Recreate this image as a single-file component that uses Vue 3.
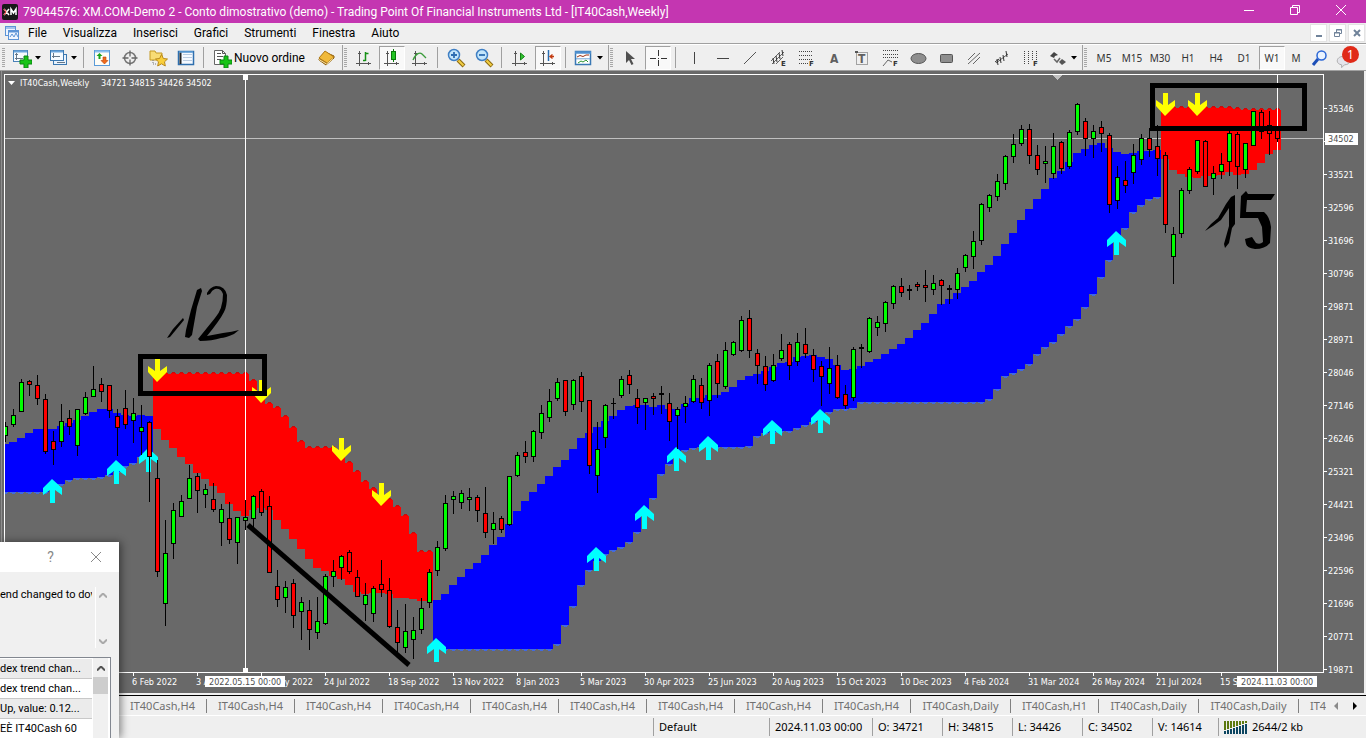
<script setup>
// Column pitch of the chart; candle i is centred on x = 5 + 8i.
const STEP = 8
const cx = (i) => 5 + STEP * i

// high, body top, body bottom, low, colour (g / r / k)
const raw = `
422 426 436 442 g|409 415 425 427 g|379 382 412 412 g|380 381 385 396 r|375 385 399 405 r|394 399 452 454 r|431 441 450 465 r|404 421 442 447 g|
410 418 427 435 r|409 409 446 456 g|392 397 414 415 g|366 389 397 397 g|378 384 392 402 r|385 385 411 418 r|409 416 428 456 r|390 408 425 429 r|
398 413 421 443 g|405 427 432 455 g|421 422 457 502 r|460 478 572 577 r|520 553 604 626 g|503 510 544 559 g|495 501 517 517 g|465 478 499 499 g|
473 476 491 513 r|484 489 495 508 g|483 499 510 512 r|504 509 523 546 g|502 518 540 544 r|517 517 543 564 g|500 517 521 530 g|495 496 519 527 g|
489 491 513 516 r|496 506 573 573 r|570 586 600 607 r|581 587 598 613 g|579 583 616 628 r|597 602 612 640 g|600 610 630 650 r|597 621 633 639 g|
574 576 624 625 g|560 571 577 587 g|555 556 568 580 g|550 552 572 574 r|570 577 597 597 r|583 595 605 621 g|586 588 614 622 g|560 584 590 597 r|
578 590 627 628 r|610 627 643 654 r|604 631 648 653 g|617 630 640 659 g|598 608 630 634 g|569 572 603 608 g|541 547 571 576 g|495 503 549 551 g|
491 496 500 514 g|490 493 503 509 g|488 497 500 511 g|495 497 511 522 r|487 513 533 538 r|512 523 530 544 g|516 518 530 533 r|476 476 525 526 g|
452 455 476 477 g|441 452 457 463 r|430 431 457 462 g|405 413 433 439 g|389 401 418 422 g|378 382 399 401 g|380 380 412 416 r|379 380 405 410 g|
372 376 402 412 r|400 400 466 474 r|422 449 476 493 g|404 405 438 448 g|398 403 404 419 k|376 379 396 398 g|370 375 385 394 r|389 398 408 424 r|
398 398 403 430 g|393 396 399 415 r|386 393 395 414 k|393 403 422 441 r|407 409 416 449 g|396 403 407 423 g|375 379 402 403 g|378 385 403 409 r|
363 365 401 416 g|354 361 384 398 r|342 350 387 389 g|341 342 355 356 g|316 320 351 352 g|310 318 351 358 r|349 353 366 384 r|356 366 385 391 r|
354 365 381 382 g|334 350 359 361 g|342 344 366 380 r|333 342 362 366 g|328 344 354 358 r|349 355 370 382 r|361 366 377 406 r|347 368 384 394 g|
355 365 398 399 r|385 394 406 409 r|347 349 398 401 g|344 347 349 368 k|317 318 352 353 g|316 322 328 336 g|301 302 324 332 g|285 286 304 309 g|
278 286 293 297 r|285 289 291 300 k|282 284 287 291 r|270 285 288 302 r|275 283 290 295 g|279 280 286 305 r|285 288 290 304 k|268 273 290 299 g|
254 255 268 272 g|231 241 257 269 g|203 204 241 245 g|194 195 208 212 g|174 181 197 201 g|155 156 184 190 g|134 144 157 163 g|125 129 144 146 g|
124 129 156 164 r|145 155 170 175 r|146 161 164 183 g|133 146 174 179 g|141 142 169 174 r|130 132 167 169 g|103 104 132 135 g|118 121 139 156 r|
125 131 139 158 g|121 127 134 152 r|133 135 205 213 r|166 177 201 209 g|161 180 186 193 r|144 155 173 184 g|134 138 160 165 g|128 138 150 157 r|
125 146 159 176 r|152 155 225 233 r|227 234 257 284 g|188 190 234 238 g|167 169 191 194 g|140 140 172 174 g|140 141 187 187 r|166 173 179 195 g|
153 164 172 179 g|131 133 162 176 g|132 134 167 189 r|143 143 170 178 g|111 111 146 146 g|110 112 132 139 r|111 125 134 155 r|128 128 139 142 r`

const fills = { g: '#00ff00', r: '#ff0000', k: '#000000' }
const candles = raw.replace(/\n/g, '').split('|').map((row, i) => {
  const [h, t, b, l, c] = row.trim().split(' ')
  return { x: cx(i), h: +h, t: +t, b: +b, l: +l, fill: fills[c] }
})

const nums = (s) => s.trim().split(/\s+/).map(Number)
const rep = (v, n) => Array(n).fill(v)
const bands = [
  {
    from: 0, dir: 'up',
    top: nums('444 442 438 433 429 429 429 426 423 420 416 412 409 409 413 415 416 415 416'),
    bottom: nums('492 492 492 492 492 492 488 484 480 478 478 478 477 475 472 466 463 457 455')
  },
  {
    from: 19, dir: 'down',
    top: [...rep(374, 12), ...nums('381 393 404 408 417 428 442 448 448 448 448 452 463 472 482 489 495 500 507 516 534 552 552')],
    bottom: nums('429 440 448 457 464 473 479 486 493 504 511 516 510 508 510 520 529 539 549 559 568 571 576 579 585 592 594 593 593 594 598 598 599 601 601')
  },
  {
    from: 54, dir: 'up',
    top: nums('600 594 585 577 569 563 555 545 537 524 511 501 492 484 476 467 460 449 438 433 427 421 416 410 406 405 405 407 405 409 409 404 398 398 395 395 392 387 380 376 374 371 367 363 362 357 356 355 357 359 365 370 369 366 362 359 354 349 344 338 330 323 314 304 299 293 287 281 272 265 256 244 233 220 209 199 189 178 171 162 153 149 145 143 148 152 154 153 151 151 150'),
    bottom: [...rep(649, 15), ...nums('644 625 606 585 570 561 554 550 547 542 532 510 498 474 464 456 450 448 447 447 447 447 447 447 446 436 433 432 431 431 428 425 422 415 412 409 409 408'), ...rep(402, 16), ...nums('399 389 376 373 369 364 354 347 342 334 326 319 307 294 277 260 241 228 212 205 199 197')]
  },
  {
    from: 145, dir: 'down',
    top: [...rep(108, 9), 109, ...rep(110, 5)],
    bottom: nums('159 170 174 177 178 176 176 175 172 175 174 170 163 154 150')
  }
]
const columns = bands.flatMap((b) => b.top.map((t, k) => ({
  x: cx(b.from + k) - 4, t, b: b.bottom[k], dir: b.dir
})))

const upArrows = [[6, 479], [14, 460], [18, 448], [54, 638], [74, 547], [80, 505], [84, 447], [88, 436], [96, 420], [102, 409], [139, 231]]
const downArrows = [[19, 382], [32, 403], [42, 461], [47, 506], [145, 116], [149, 116]]

const prices = [35346, 34446, 33521, 32596, 31696, 30796, 29871, 28971, 28046, 27146, 26246, 25321, 24421, 23496, 22596, 21696, 20771, 19871]
const dates = ['6 Feb 2022', '3 Apr 2022', '29 May 2022', '24 Jul 2022', '18 Sep 2022', '13 Nov 2022', '8 Jan 2023', '5 Mar 2023', '30 Apr 2023', '25 Jun 2023', '20 Aug 2023', '15 Oct 2023', '10 Dec 2023', '4 Feb 2024', '31 Mar 2024', '26 May 2024', '21 Jul 2024', '15 Sep 2024']

const menus = ['File', 'Visualizza', 'Inserisci', 'Grafici', 'Strumenti', 'Finestra', 'Aiuto']

const axes = '<path d="M5.5 3v15M2 15.5h15M4 5.5h3M14.5 14v3" stroke="#555" fill="none"/>'
const plus = '<path d="M12 8h4v4h4v4h-4v4h-4v-4H8v-4h4z" fill="#16c416" stroke="#0a8412"/>'
const lens = '<path d="M12 12l6 6" stroke="#8c6a10" stroke-width="4"/><path d="M12.500 12.500l5 5" stroke="#f2cf45" stroke-width="2"/><circle cx="8" cy="7" r="5.500" fill="#c3e6fb" stroke="#3f7fc4" stroke-width="1.500"/>'
const letter = (c) => `<text x="13" y="18" font-size="7" font-weight="700" fill="#333" font-family="DejaVu Sans">${c}</text>`
const icons = {
  newChart: `<rect x="1.500" y="2.500" width="14" height="11" fill="#f7fbff" stroke="#4a82b8"/><path d="M2 3.500h13" stroke="#6aa5dc" stroke-width="2"/><path d="M4.500 5v7M3 10.500h8M3 6.500h3" stroke="#678"/>${plus}`,
  profiles: '<rect x="5.500" y="6.500" width="13" height="10" fill="#e9f3fd" stroke="#3c78b0"/><rect x="2.500" y="2.500" width="13" height="10" fill="#f7fbff" stroke="#3c78b0"/><path d="M3 3.500h12" stroke="#6aa5dc" stroke-width="2"/><path d="M5.500 5v5M4 8.500h8M9 14.500h8" stroke="#678"/>',
  market: '<rect x="2.500" y="2.500" width="15" height="15" fill="#fffdf6" stroke="#5b9bd8" /><path d="M3 3.500h14" stroke="#8cc0ee" stroke-width="2"/><path d="M7.500 5l3 3h-2v3h-2V8h-2z" fill="#19a319"/><path d="M12.500 16l3.500-3.500h-2V9h-3v3.500H9z" fill="#f06a1b" stroke="#b8430c" stroke-width=".6"/>',
  cross: '<circle cx="10" cy="10" r="5.500" fill="none" stroke="#777" stroke-width="1.500"/><path d="M10 2.500v6M10 11.500v6M2.500 10h6M11.500 10h6" stroke="#666" stroke-width="1.300"/>',
  star: '<path d="M2 3h5l1 2h6v7H2z" fill="#f8dc75" stroke="#c49a24"/><path d="M5 12v4h4" stroke="#777" stroke-dasharray="1 1" fill="none"/><path d="M13.500 6.500l1.900 4 4.100.5-3 2.800.8 4.200-3.800-2.200L9.700 18l.8-4.200-3-2.800 4.100-.5z" fill="#f9cf3b" stroke="#b8871b"/>',
  panel: '<rect x="2.500" y="3.500" width="15" height="13" fill="#f4f9ff" stroke="#2f6fae" stroke-width="1.500"/><path d="M4.500 4v12" stroke="#222" stroke-width="2"/><path d="M7 6.500h9M7 9.500h9M7 12.500h9" stroke="#b9cbe0"/><path d="M3 4h14" stroke="#5f9fd9" stroke-width="1.500"/>',
  order: `<path d="M2.500 2.500h8l3 3v11h-11z" fill="#fff" stroke="#666"/><path d="M10.500 2.500v3h3M5 5.500h4M5 8.500h6M5 11.500h4" stroke="#555" fill="none"/>${plus}`,
  book: '<path d="M3 12l7 5 8-7v-2l-9-4-6 7z" fill="#a06c12" stroke="#8a5c0c"/><path d="M3 10l6-7 9 6-7 6z" fill="#f0b93a" stroke="#b07a18"/><path d="M3 11.500l7.500 4.500 6.500-5.500" stroke="#ffe9a8" fill="none"/>',
  bars: `${axes}<path d="M11.500 4v9M11.500 5.500h3M9 12.500h2.500" stroke="#159015" stroke-width="1.500" fill="none"/>`,
  candles: `${axes}<path d="M11.500 1v13" stroke="#0a7a0a"/><rect x="9.500" y="3.500" width="4" height="8" fill="#23c423" stroke="#0a7a0a"/>`,
  line: `${axes}<path d="M3 12c3-7 7-8 9-6l4 4" stroke="#3b9c3b" stroke-width="1.300" fill="none"/>`,
  zoomIn: `${lens}<path d="M8 4v6M5 7h6" stroke="#2d6db2" stroke-width="1.800"/>`,
  zoomOut: `${lens}<path d="M5 7h6" stroke="#2d6db2" stroke-width="1.800"/>`,
  scroll: `${axes}<path d="M10.500 5v7l4-3.500z" fill="#31c431" stroke="#138013"/>`,
  shift: `${axes}<path d="M10.500 2v11" stroke="#2a6db0" stroke-width="1.500"/><path d="M12 8.500h4M14.500 6.500l-2.500 2 2.500 2" stroke="#c23a10" stroke-width="1.300" fill="none"/>`,
  indicators: '<rect x="1.500" y="3.500" width="15" height="13" fill="#fff" stroke="#3a78b4" stroke-width="1.500"/><path d="M1 4.500h16" stroke="#4f90cf" stroke-width="2.500"/><path d="M3 9l3-1.500 3 1 3-1.500 3 0" stroke="#9c3314" fill="none"/><path d="M2 10.800h14" stroke="#6fa5d8"/><path d="M4 15l3-2 2 1 3-2 2 2" stroke="#2e9532" fill="none"/>',
  cursor: '<path d="M6 3v12l3-3 2.500 5 2-1-2.500-5h4z" fill="#505050"/>',
  plusCross: '<path d="M10.500 2v6M10.500 12v6M2 10.500h6M13 10.500h6" stroke="#333"/><path d="M10 10.500h1" stroke="#333"/>',
  vline: '<path d="M10.500 4v12" stroke="#444"/>',
  hline: '<path d="M5 10.500h12" stroke="#444"/>',
  trend: '<path d="M4 16L16 4" stroke="#555"/>',
  channel: `<path d="M3 13L12 4M4 16L16 4M8 16l7-7" stroke="#666"/><path d="M5 10l1 6M8 8l1 6M11 5l1 6M14 2l1 6" stroke="#333"/>${letter('E')}`,
  fibo: `<path d="M3 3.500h14M3 7.500h14M3 11.500h14M3 15.500h9" stroke="#444" stroke-dasharray="1 1"/>${letter('F')}`,
  textA: '<text x="6" y="15" font-size="12" font-weight="700" fill="#606060" font-family="DejaVu Sans Condensed, DejaVu Sans">A</text>',
  label: '<rect x="4.500" y="4.500" width="11" height="12" fill="none" stroke="#555" stroke-dasharray="1 1"/><path d="M3 3h3v2H3z" fill="#555"/><text x="6" y="15" font-size="12" font-weight="700" fill="#606060" font-family="DejaVu Sans Condensed, DejaVu Sans">T</text>',
  fan: `<path d="M3 2.500h15M3 6.500h15M3 9.500h15" stroke="#444" stroke-dasharray="1 1"/><path d="M3 18l5-6 4 2" stroke="#666" fill="none"/>${letter('F')}`,
  ellipse: '<ellipse cx="10.500" cy="10.500" rx="7.500" ry="5" fill="#8e8e8e" stroke="#555"/>',
  rect: '<rect x="4.500" y="6.500" width="12" height="8" rx="1" fill="#8e8e8e" stroke="#555"/>',
  hatch: '<path d="M4 12l7-7M4 16L16 5M9 16l7-7" stroke="#666"/>',
  fork: '<path d="M4 15l12-9" stroke="#555"/><path d="M5 11l1 6M8 9l1 6M11 7l1 6M14 3l1 6M3 14l4-3" stroke="#333" fill="none"/>',
  timeF: `<path d="M4.500 3v14M8.500 3v14M12.500 3v9M16.500 3v9" stroke="#444" stroke-dasharray="1 1"/>${letter('F')}`,
  arrows: '<path d="M2 8l4-4 4 3-3 1-1 2z" fill="#444"/><path d="M6 11l3 3 3-4" stroke="#666" stroke-width="1.500" fill="none"/><path d="M11 14l3-3 4 3-4 3z" fill="#555"/>',
  search: '<path d="M8 11l-5 6" stroke="#1c4fb8" stroke-width="3"/><circle cx="11.500" cy="7.500" r="4.500" fill="#eaf3ff" stroke="#2a66d6" stroke-width="1.500"/>'
}

const sep = { kind: 'sep' }
const bar = { kind: 'bar' }
const grip = { kind: 'grip' }
const b = (icon, name, extra = {}) => ({ kind: 'btn', icon, name, ...extra })
const tf = (text, extra = {}) => ({ kind: 'btn', text, name: text, ...extra })
const tools = [
  grip, b('newChart', 'Nuovo grafico', { caret: true }), b('profiles', 'Profili', { caret: true }), sep,
  b('market', 'Market Watch'), b('cross', 'Finestra dati'), b('star', 'Navigatore'), b('panel', 'Terminale'), sep,
  b('order', 'Nuovo ordine', { label: 'Nuovo ordine' }), b('book', 'MetaEditor'), bar, grip,
  b('bars', 'Barre'), b('candles', 'Candele', { on: true }), b('line', 'Linea'), sep,
  b('zoomIn', 'Zoom avanti'), b('zoomOut', 'Zoom indietro'), sep,
  b('scroll', 'Scorrimento'), b('shift', 'Spostamento', { on: true }), sep,
  b('indicators', 'Indicatori', { caret: true }), bar, grip,
  b('cursor', 'Cursore'), b('plusCross', 'Mirino', { on: true }), sep,
  b('vline', 'Linea verticale'), b('hline', 'Linea orizzontale'), b('trend', 'Trendline'), b('channel', 'Canale'),
  b('fibo', 'Fibonacci'), b('textA', 'Testo'), b('label', 'Etichetta'), b('fan', 'Ventaglio'), b('ellipse', 'Ellisse'),
  b('rect', 'Rettangolo'), b('hatch', 'Canale parallelo'), b('fork', 'Forchetta'), b('timeF', 'Zone temporali'),
  b('arrows', 'Frecce', { caret: true }), bar, grip,
  tf('M5'), tf('M15'), tf('M30'), tf('H1'), tf('H4'), tf('D1'), tf('W1', { on: true }), tf('M', { slim: true }),
  b('search', 'Cerca')
]

const tabs = [...rep('H4', 9), 'Daily', 'H1', 'Daily', 'Daily', 'H4']
const quotes = ['O: 34721', 'H: 34815', 'L: 34426', 'C: 34502', 'V: 14614']
const alerts = ['dex trend chan...', 'dex trend chan...', 'Up, value: 0.12...', 'EÈ IT40Cash 60']
</script>

<template>
  <div class="app">
    <header class="title">
      <svg class="logo" viewBox="0 0 16 16"><rect width="16" height="16" rx="2" fill="#181818" /><path d="M2 5l5 6M7 5l-5 6M9 11V5l2.500 4L14 5v6" stroke="#fff" stroke-width="1.500" fill="none" /><path d="M2 5l2 3-2 3" stroke="#e02020" stroke-width="1" fill="none" /></svg>
      <span class="caption">79044576: XM.COM-Demo 2 - Conto dimostrativo (demo) - Trading Point Of Financial Instruments Ltd - [IT40Cash,Weekly]</span>
      <button class="win" aria-label="Riduci"><svg viewBox="0 0 12 12"><path d="M1 6.500h10" /></svg></button>
      <button class="win" aria-label="Ripristina"><svg viewBox="0 0 12 12"><path d="M1.500 3.500h7v7h-7zM3.500 3.500v-2h7v7h-2" /></svg></button>
      <button class="win" aria-label="Chiudi"><svg viewBox="0 0 12 12"><path d="M1 1l10 10M11 1L1 11" /></svg></button>
    </header>

    <nav class="menu">
      <svg class="menu-icon" viewBox="0 0 16 16"><rect x="1.500" y="1.500" width="10" height="9" fill="#eef5ff" stroke="#5b93d6" /><path d="M2 3h9" stroke="#5b93d6" /><rect x="4.500" y="5.500" width="10" height="9" fill="#eef5ff" stroke="#5b93d6" /><path d="M5 6.500h9" stroke="#5b93d6" stroke-width="2" /><path d="M6 12l2-3 2 3 2-4 2 4" stroke="#5b93d6" fill="none" /></svg>
      <button v-for="m in menus" :key="m" class="menu-item">{{ m }}</button>
      <span class="spacer"></span>
      <button class="mdi" aria-label="Riduci grafico"><svg viewBox="0 0 10 10"><path d="M2 8h6" stroke-width="2" /></svg></button>
      <button class="mdi" aria-label="Ripristina grafico"><svg viewBox="0 0 10 10"><path d="M1.500 4.500h5v4h-5zM1 5h6M3.500 4V1.500h5v4H7M3 2h6" /></svg></button>
      <button class="mdi" aria-label="Chiudi grafico"><svg viewBox="0 0 10 10"><path d="M2 2l6 6M8 2L2 8" stroke-width="2" /></svg></button>
    </nav>

    <div class="tools">
      <template v-for="(t, i) in tools" :key="i">
        <span v-if="t.kind !== 'btn'" :class="t.kind"></span>
        <button v-else :class="['tool', { on: t.on, wide: t.caret, named: t.label, slim: t.slim }]" :aria-label="t.name">
          <svg v-if="t.icon" class="ico" viewBox="0 0 20 20" v-html="icons[t.icon]"></svg>
          <span v-if="t.text" class="tf">{{ t.text }}</span>
          <span v-if="t.label" class="label">{{ t.label }}</span>
          <svg v-if="t.caret" class="caret" viewBox="0 0 6 4"><path d="M0 0h6L3 3.500z" /></svg>
        </button>
      </template>
      <button class="chat" aria-label="Messaggi">
        <svg viewBox="0 0 16 14"><path d="M8 1c9 0 9 9 1 9l-3 3V10C-1 9 0 1 8 1z" fill="#e4e4ea" stroke="#aaa" /></svg>
        <span class="badge">1</span>
      </button>
    </div>

    <main class="chart">
      <svg class="plot" viewBox="0 71 1364 622" preserveAspectRatio="xMinYMin meet">
        <defs><clipPath id="area"><rect x="5" y="75" width="1318" height="597" /></clipPath></defs>
        <path d="M1.500 71v622" stroke="#8f8f8f" shape-rendering="crispEdges" />
        <g clip-path="url(#area)" shape-rendering="crispEdges">
          <path d="M5 138.500h1318" stroke="#c0c0c0" />
          <g v-for="c in columns" :key="c.x">
            <rect :x="c.x" :y="c.t" width="8" :height="c.b - c.t" :fill="c.dir === 'up' ? '#0000ff' : '#ff0000'" />
            <template v-if="c.dir === 'up'">
              <rect :x="c.x + 1" :y="c.b" width="6" height="1" fill="#4169e1" />
              <rect :x="c.x + 3" :y="c.b + 1" width="3" height="1" fill="#4169e1" />
            </template>
            <template v-else>
              <rect :x="c.x + 2" :y="c.t - 1" width="5" height="1" fill="#f00000" />
              <rect :x="c.x + 3" :y="c.t - 2" width="3" height="1" fill="#c80a0a" />
            </template>
          </g>
          <path d="M245.500 75v597M1277.500 75v597" stroke="#fff" />
          <path d="M243 75h5v5h-5zM243 668h5v4h-5z" fill="#fff" />
          <path d="M1052 75h11l-5.500 5z" fill="#c0c0c0" />
          <g shape-rendering="auto">
            <polygon v-for="[i, y] in upArrows" :key="'u' + i" points="0,0 10,9 10,16 3,11 3,24 -2,24 -2,11 -9,16 -9,9" fill="#00ffff" :transform="`translate(${cx(i) - 1} ${y})`" />
            <polygon v-for="[i, y] in downArrows" :key="'d' + i" points="0,0 10,-10 10,-16 3,-11 3,-23 -2,-23 -2,-11 -9,-16 -9,-10" fill="#ffff00" :transform="`translate(${cx(i)} ${y})`" />
          </g>
          <g v-for="k in candles" :key="k.x">
            <rect :x="k.x" :y="k.h" width="1" :height="k.l - k.h" />
            <rect :x="k.x - 2" :y="k.t" width="5" :height="k.b - k.t" />
            <rect v-if="k.b - k.t > 2" :x="k.x - 1" :y="k.t + 1" width="3" :height="k.b - k.t - 2" :fill="k.fill" />
          </g>
        </g>

        <g stroke="#fff" fill="none" shape-rendering="crispEdges">
          <path d="M4.500 672.500V74.500H1323.500V672.500z" />
          <path v-for="(p, i) in prices" :key="p" :d="`M1323 ${108.5 + 33 * i}h4`" />
          <path v-for="(d, i) in dates" :key="d" :d="`M${133.5 + 64 * i} 672v4`" />
        </g>
        <path d="M8 81h7l-3.500 4z" fill="#fff" />
        <g class="scale">
          <text x="20" y="86">IT40Cash,Weekly</text>
          <text x="101" y="86">34721 34815 34426 34502</text>
          <text v-for="(p, i) in prices" :key="p" x="1328" :y="112 + 33 * i">{{ p }}</text>
          <text v-for="(d, i) in dates" :key="d" :x="132 + 64 * i" y="685">{{ d }}</text>
        </g>
        <path d="M1325 133h33v12h-33zM205 676h80v11h-80zM1237 676h80v11h-80z" fill="#fff" />
        <g class="scale mark">
          <text x="1328" y="142">34502</text>
          <text x="209" y="685">2022.05.15 00:00</text>
          <text x="1241" y="685">2024.11.03 00:00</text>
        </g>

        <g fill="none" stroke="#000" stroke-width="5">
          <path d="M140.500 356.500h124v37h-124zM1152.500 85.500h152v43h-152z" />
          <path d="M248 525L409 665" stroke-width="5" />
        </g>
        <g fill="#000">
          <path d="M167 338l6-9 10-11 1 2-9 11-5 6z" />
          <path d="M197 290l4-2 1 3-5 16-5 28-3 3-4-1 1-7 5-20z" />
          <path d="M207 293q3-6 9-7 9 0 11 9 0 12-3 17-4 8-17 24l16-3q9-1 16-3l-5 4q-9 4-13 4-9 3-21 3l-2-2 17-21q8-9 8-24-2-6-8-5-3 1-5 5l-3 1z" />
          <path d="M1205 231L1211 224 1218 218 1226 204 1231 197 1235 195 1235 224 1232 228 1229 243 1225 248 1224 244 1229 226 1229 208 1221 220 1213 226z" />
          <path d="M1241 196l5-5 2 3h27l-4 6h-24l-1 12h18q6 5 7 15l-1 16q-5 6-15 6-8-1-9-5l-1-5 7-2 4 6q4 2 7-1l-1-15-4-9h-18z" />
        </g>
      </svg>
    </main>

    <div class="tabs">
      <div class="tab-strip">
        <button v-for="(t, i) in tabs" :key="i" :class="['tab', { daily: t === 'Daily' }]">IT40Cash,{{ t }}</button>
      </div>
      <button class="turn" aria-label="Precedente"><svg viewBox="0 0 4 8"><path d="M4 0v8L0 4z" fill="#8a8a8a" /></svg></button>
      <button class="turn" aria-label="Successivo"><svg viewBox="0 0 4 8"><path d="M0 0v8l4-4z" fill="#000" /></svg></button>
    </div>

    <footer class="status">
      <span class="cell profile">Default</span>
      <span class="cell stamp">2024.11.03 00:00</span>
      <span v-for="q in quotes" :key="q" :class="['cell', 'quote', { volume: q[0] === 'V' }]">{{ q }}</span>
      <span class="cell net">
        <svg viewBox="0 0 24 14" shape-rendering="crispEdges">
          <g v-for="n in 8" :key="n"><rect :x="3 * n - 3" y="1" width="2" :height="10 - n" fill="#5c7a10" /><rect :x="3 * n - 3" :y="12 - n" width="2" :height="n + 2" fill="#0b4560" /></g>
        </svg>
        2644/2 kb
      </span>
    </footer>

    <section class="dialog" aria-label="Alert">
      <div class="dialog-head">
        <button aria-label="Aiuto">?</button>
        <button aria-label="Chiudi avviso"><svg viewBox="0 0 12 12"><path d="M1 1l10 10M11 1L1 11" stroke="#888" /></svg></button>
      </div>
      <div class="message">
        <p>end changed to dov</p>
        <div class="arrows"><svg viewBox="0 0 8 5"><path d="M0 4.500l4-4 4 4" /></svg><svg viewBox="0 0 8 5"><path d="M0 .5l4 4 4-4" /></svg></div>
      </div>
      <div class="list">
        <ul><li v-for="(a, i) in alerts" :key="i">{{ a }}</li></ul>
        <div class="bar-track"><svg viewBox="0 0 8 5"><path d="M0 4.500l4-4 4 4" /></svg><i></i></div>
      </div>
    </section>
  </div>
</template>

<style>
html, body { height: 100%; margin: 0; overflow: hidden; }
#app { height: 100%; }
</style>

<style scoped>
.app { position: relative; display: flex; flex-direction: column; height: 100%; background: #efefef; color: #000; font: 11px/16px "Noto Sans", "Open Sans", sans-serif; overflow: hidden; }
button { margin: 0; padding: 0; border: 0; background: none; color: inherit; font: inherit; white-space: nowrap; }
svg { display: block; flex: none; }

.title { display: flex; align-items: center; height: 23px; flex: none; padding-right: 2px; background: #c436b1; color: #fff; }
.logo { width: 16px; height: 16px; margin: 0 5px 0 2px; }
.caption { flex: 1; font: 12px/16px Roboto, sans-serif; white-space: nowrap; overflow: hidden; }
.win { display: flex; justify-content: center; width: 46px; padding-bottom: 3px; }
.win svg { width: 12px; height: 12px; fill: none; stroke: #fff; }

.menu { display: flex; align-items: center; height: 20px; flex: none; border-bottom: 1px solid #a0a0a0; padding: 0 1px 0 4px; font: 12px/16px Roboto, sans-serif; }
.menu-icon { width: 16px; height: 16px; margin-right: 8px; }
.menu-item { margin-right: 16px; }
.spacer { flex: 1; }
.mdi { display: flex; align-items: center; justify-content: center; width: 17px; height: 18px; margin-left: 2px; background: #fff; border: 1px solid #e3e3e3; }
.mdi svg { width: 10px; height: 10px; fill: none; stroke: #70839a; }

.tools { display: flex; align-items: center; height: 25px; flex: none; padding-left: 2px; border-top: 1px solid #fff; border-bottom: 1px solid #a0a0a0; }
.grip { width: 3px; height: 19px; margin-right: 3px; background: repeating-linear-gradient(#a8a8a8 0 1px, #efefef 1px 2px); }
.sep { width: 1px; height: 21px; margin: 0 4px 0 3px; background: #a0a0a0; }
.bar { width: 1px; height: 25px; margin: 0 1px 0 2px; background: #a0a0a0; }
.tool { display: flex; align-items: center; justify-content: center; width: 28px; height: 25px; flex: none; }
.tool.wide { width: 36px; gap: 3px; }
.tool.named { width: 104px; justify-content: flex-start; padding-left: 4px; gap: 2px; }
.tool.slim { width: 20px; }
.tool.on { width: 26px; height: 24px; margin: 0 1px; box-sizing: border-box; border: 1px solid #a0a0a0; border-color: #a0a0a0 #fff #fff #a0a0a0; background: #f9f9f9; }
.ico { width: 20px; height: 20px; }
.label { font: 12px/16px Roboto, sans-serif; }
.caret { width: 6px; height: 4px; }
.tf { font-size: 10px; color: #333; }
.chat { position: relative; flex: 1; height: 25px; }
.chat svg { width: 15px; height: 14px; margin: 8px 0 0 2px; }
.badge { position: absolute; left: 8px; top: 1px; width: 17px; height: 17px; border-radius: 50%; background: #e02a18; color: #fff; font-size: 12px; line-height: 17px; text-align: center; }

.chart { flex: 1; min-height: 0; margin-right: 2px; background: #696969; }
.plot { width: 100%; height: 100%; }
.scale { font: 9px "DejaVu Sans Condensed", "DejaVu Sans", sans-serif; fill: #fff; }
.mark { fill: #505050; }

.tabs { display: flex; align-items: center; height: 19px; flex: none; margin-top: 2px; padding-right: 2px; border-top: 1px solid #000; border-bottom: 1px solid #fff; color: #707070; }
.tab-strip { display: flex; flex: 1; min-width: 0; padding-left: 119px; overflow: hidden; }
.tab { flex: none; width: 88px; height: 14px; line-height: 14px; border-right: 1px solid #808080; }
.tab.daily { width: 100px; }
.turn { display: flex; justify-content: center; width: 19px; flex: none; }
.turn svg { width: 4px; height: 8px; }

.status { display: flex; justify-content: flex-end; align-items: center; height: 22px; flex: none; }
.cell { box-sizing: border-box; height: 18px; border-left: 1px solid #a0a0a0; padding-left: 5px; line-height: 18px; white-space: nowrap; }
.profile { width: 116px; }
.stamp { width: 103px; }
.quote { width: 70px; }
.quote.volume { width: 66px; }
.net { display: flex; align-items: center; gap: 4px; width: 148px; }
.net svg { width: 24px; height: 14px; }

.dialog { position: absolute; left: 0; bottom: 0; width: 119px; height: 196px; background: #f0f0f0; box-shadow: 2px 0 8px #0007; font: 11px/16px Roboto, sans-serif; overflow: hidden; }
.dialog-head { display: flex; justify-content: flex-end; align-items: center; height: 30px; padding-right: 1px; background: #fff; color: #888; }
.dialog-head button { display: flex; justify-content: center; width: 45px; font-size: 14px; }
.dialog-head svg { width: 12px; height: 12px; }
.message { display: flex; justify-content: space-between; height: 61px; margin: 15px 8px 9px 0; }
.message p { width: 92px; margin: 0; overflow: hidden; white-space: nowrap; }
.arrows { display: flex; flex-direction: column; justify-content: space-between; padding: 6px 4px 4px 3px; border-left: 1px solid #fff; }
.arrows svg, .bar-track svg { width: 8px; height: 5px; fill: none; stroke: #aaa; stroke-width: 2px; }
.list { display: flex; height: 90px; margin-right: 8px; border-top: 1px solid #828790; border-right: 1px solid #828790; background: #fff; }
.list ul { flex: 1; min-width: 0; margin: 1px 1px 0 0; padding: 0; list-style: none; overflow: hidden; }
.list li { height: 19px; line-height: 19px; border-bottom: 1px solid #c8c8c8; white-space: nowrap; background: #fff; }
.list li:nth-child(odd) { background: #ebebeb; }
.bar-track { width: 15px; margin-right: 2px; background: #f0f0f0; }
.bar-track svg { margin: 8px auto 6px 4px; stroke: #555; }
.bar-track i { display: block; height: 17px; background: #cdcdcd; }
</style>
